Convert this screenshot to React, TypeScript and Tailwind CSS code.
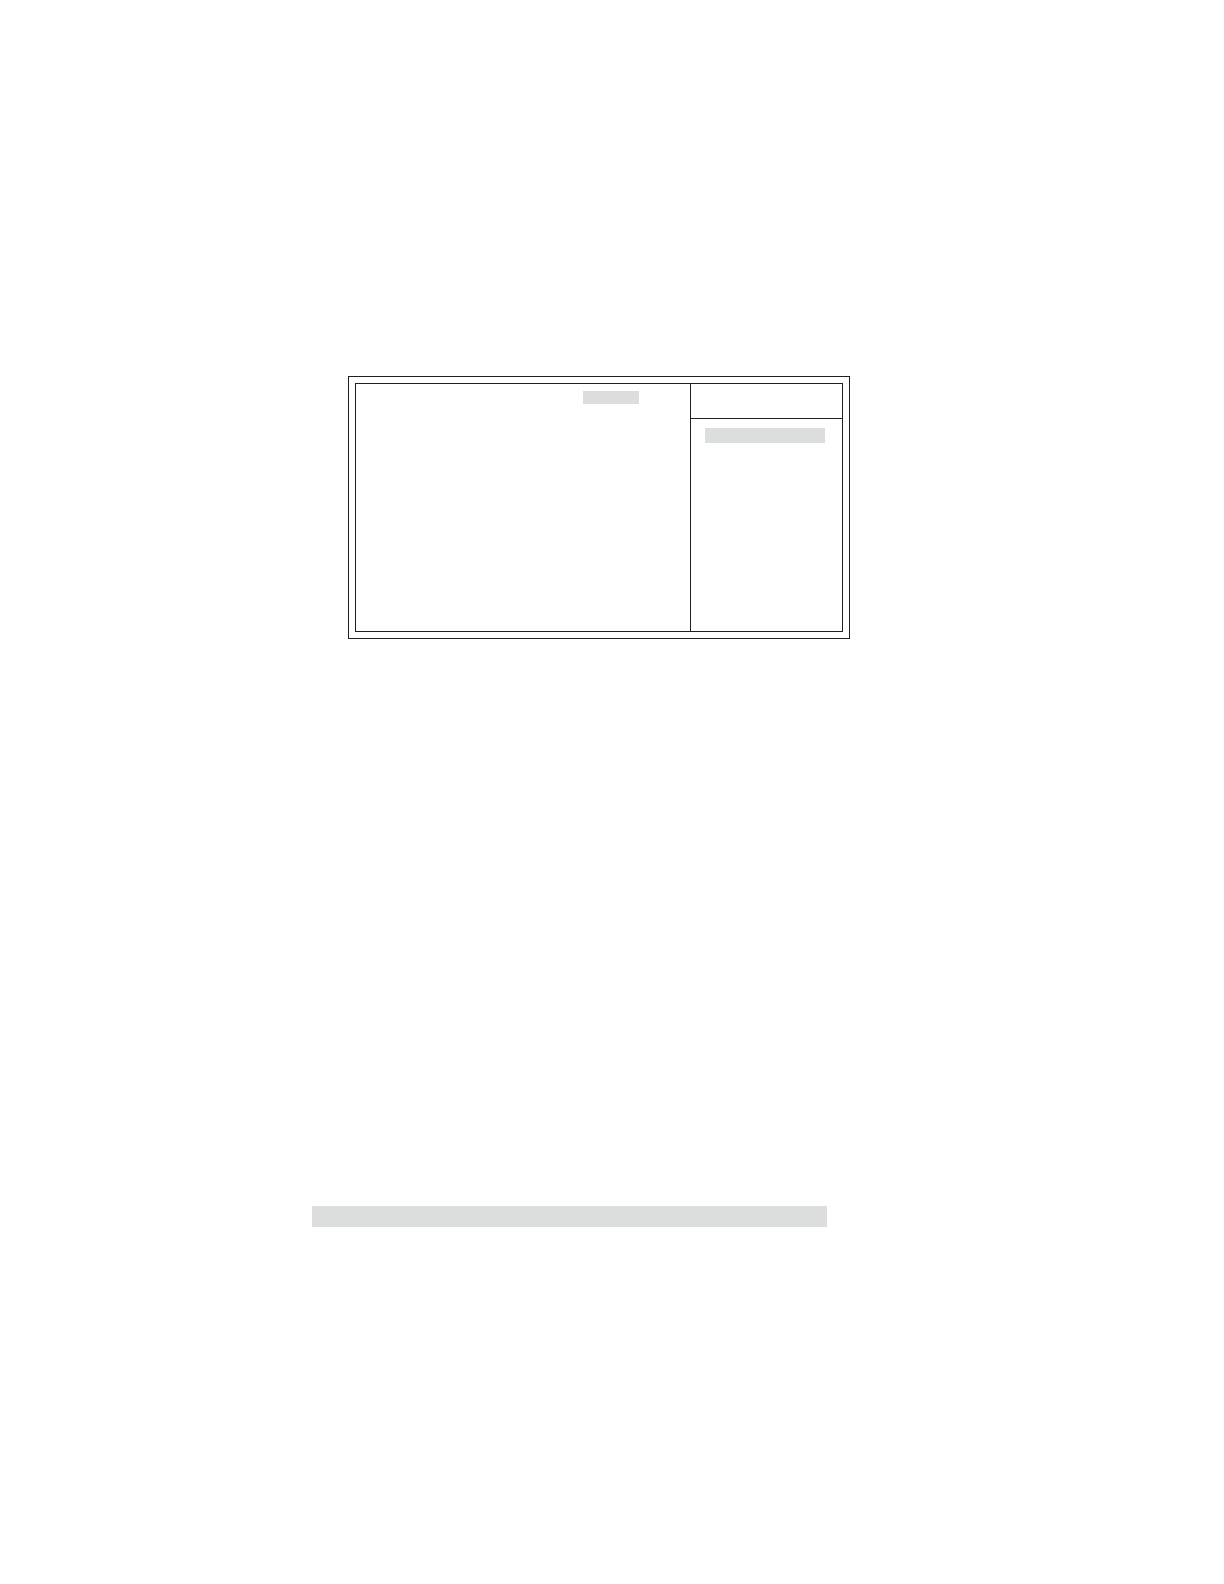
type HighlightProps = {
    className: string;
};

const Highlight = ({ className }: HighlightProps) => (
    <div className={`bg-[#dcdddd] ${className}`} />
);

const SetupScreen = () => {
    return (
        <section className="ml-9 w-full max-w-[502px] border border-[#231f20] p-1.5">
            <div className="flex min-h-[249px] border border-[#231f20]">
                {/* Option list */}
                <div className="flex flex-1 items-start justify-end pt-[7px] pr-[51px]">
                    <Highlight className="h-[13px] w-14" />
                </div>

                {/* Help column */}
                <aside className="flex w-[152px] flex-col border-l border-[#231f20]">
                    <header className="h-[35px] border-b border-[#231f20]" />
                    <div className="flex-1 pt-[9px] pr-[17px] pl-3.5">
                        <Highlight className="h-[15px]" />
                    </div>
                </aside>
            </div>
        </section>
    );
};

const App = () => {
    return (
        <main className="flex min-h-screen flex-col gap-[567px] bg-white pt-[376px] pr-8 pb-8 pl-[312px] font-['Liberation_Sans',sans-serif]">
            <SetupScreen />
            <Highlight className="h-[21px] w-full max-w-[515px]" />
        </main>
    );
};

export default App;
